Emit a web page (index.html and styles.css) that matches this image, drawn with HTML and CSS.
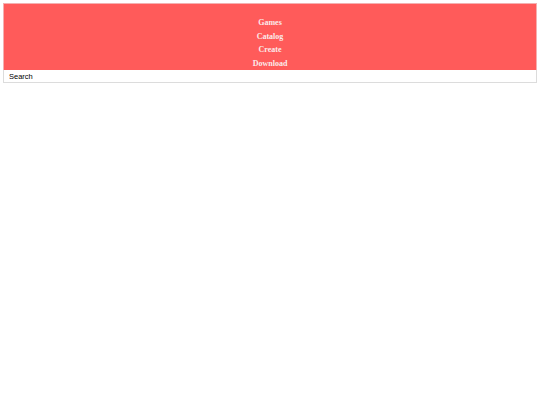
FILE: index.html
```html
<!DOCTYPE html>
<html>
<head>
<meta charset="utf-8">
<link rel="stylesheet" href="styles.css">
</head>
<body>
<header class="top">
  <nav class="menu">
    <a class="menu-link" href="#">Games</a>
    <a class="menu-link" href="#">Catalog</a>
    <a class="menu-link" href="#">Create</a>
    <a class="menu-link" href="#">Download</a>
  </nav>
</header>
<div class="search">Search</div>
</body>
</html>
```
FILE: styles.css
```css
html, body {
  margin: 0;
  padding: 0;
  background: #ffffff;
}
body {
  margin: 3px;
}
.top {
  background: #ff5b5a;
  border: 1px solid #f4b0b0;
  border-bottom: none;
  padding-top: 12px;
  height: 54px;
}
.menu {
  display: flex;
  flex-direction: column;
  align-items: center;
}
.menu-link {
  font-family: "Liberation Serif", serif;
  font-weight: bold;
  font-size: 8px;
  line-height: 13.5px;
  color: #fbeaea;
  text-decoration: none;
}
.search {
  font-family: "Liberation Sans", Arial, sans-serif;
  font-size: 7.5px;
  line-height: 11px;
  height: 11px;
  padding-top: 1px;
  padding-left: 5px;
  color: #000000;
  border: 1px solid #dcdcdc;
  border-top: none;
}
```
